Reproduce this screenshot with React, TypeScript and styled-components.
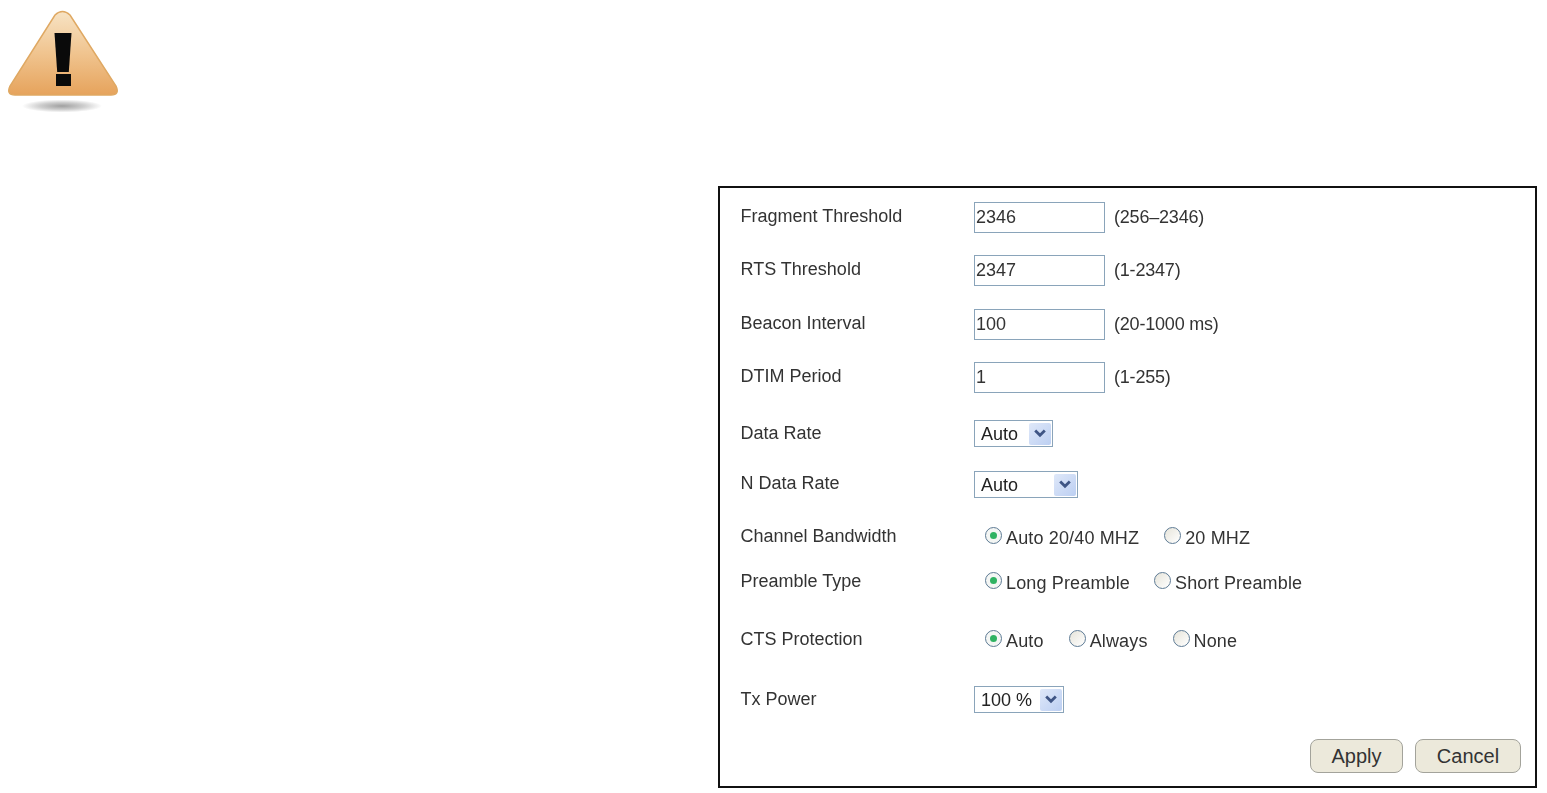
import React from 'react'
import styled, { createGlobalStyle } from 'styled-components'

const GlobalStyle = createGlobalStyle`
  html, body {
    margin: 0;
    padding: 0;
    background: #fff;
    font-family: "Liberation Sans", Arial, sans-serif;
  }
`

// the source is a soft, scaled-up capture, so everything is slightly out of focus
const Page = styled.div`
  width: 1547px;
  height: 793px;
  overflow: hidden;
  filter: blur(0.4px);
`

const WarningIcon = styled.svg`
  display: block;
  width: 130px;
  height: 120px;
`

const Panel = styled.form`
  box-sizing: border-box;
  width: 819px;
  height: 602px;
  margin: 66px 0 0 718px;
  padding: 14px 14px 0 21px;
  border: 2px solid #111;
`

const Row = styled.div<{ $h: number }>`
  display: flex;
  align-items: flex-start;
  height: ${(p) => p.$h}px;
`

const Label = styled.div<{ $top: number }>`
  width: 233px;
  flex-shrink: 0;
  margin-top: ${(p) => p.$top}px;
  margin-left: -0.5px;
  margin-right: 0.5px;
  font-size: 18px;
  line-height: 20px;
  color: #333;
`

const TextBox = styled.input`
  box-sizing: border-box;
  width: 131px;
  height: 31px;
  margin: 0;
  padding: 0 2px 0 1px;
  border: 1px solid #8aa4ba;
  background: #fff;
  font-family: inherit;
  font-size: 18px;
  color: #333;
  outline: none;
`

const Hint = styled.span`
  margin-left: 9px;
  font-size: 18px;
  line-height: 31px;
  letter-spacing: -0.2px;
  color: #333;
`

const SelectBox = styled.div<{ $w: number }>`
  box-sizing: border-box;
  display: flex;
  align-items: center;
  justify-content: space-between;
  width: ${(p) => p.$w}px;
  height: 27px;
  padding: 0 1px 0 6px;
  border: 1px solid #8aa4ba;
  background: #fff;
  font-size: 18px;
  color: #222;
`

const SelectText = styled.span`
  padding-top: 2px;
`

const SelectArrow = styled.span`
  display: flex;
  align-items: center;
  justify-content: center;
  width: 22px;
  height: 22px;
  border-radius: 2px;
  background: linear-gradient(135deg, #dfe8f9, #bccff2);
`

const RadioGroup = styled.div<{ $top: number; $gap: number }>`
  display: flex;
  gap: ${(p) => p.$gap}px;
  margin-top: ${(p) => p.$top}px;
  padding-left: 11px;
`

const RadioOption = styled.label`
  display: flex;
  align-items: flex-start;
  gap: 4px;
  font-size: 18px;
  line-height: 22px;
  letter-spacing: 0.15px;
  color: #333;
`

const RadioDot = styled.span<{ $on?: boolean }>`
  box-sizing: border-box;
  display: flex;
  align-items: center;
  justify-content: center;
  width: 17px;
  height: 17px;
  border: 1.5px solid #5d7a94;
  border-radius: 50%;
  background: ${(p) => (p.$on ? '#f4f6f4' : 'linear-gradient(135deg, #e6e4da, #fff)')};

  &::after {
    content: '';
    display: ${(p) => (p.$on ? 'block' : 'none')};
    width: 7px;
    height: 7px;
    border-radius: 50%;
    background: #2fb262;
  }
`

const Footer = styled.div`
  display: flex;
  justify-content: flex-end;
  gap: 12px;
`

const ActionButton = styled.button<{ $w: number }>`
  box-sizing: border-box;
  width: ${(p) => p.$w}px;
  height: 34px;
  padding: 0;
  border: 1.5px solid #a3a39b;
  border-radius: 8px;
  background: #ece9db;
  font-family: inherit;
  font-size: 20px;
  color: #333;
`

const Chevron = () => (
  <svg width="14" height="11" viewBox="0 0 14 11">
    <path d="M2.200 2.500 L7 7.300 L11.800 2.500" fill="none" stroke="#3f5585" strokeWidth="2.800" />
  </svg>
)

const Warning = () => (
  <WarningIcon viewBox="0 0 130 120">
    <defs>
      <linearGradient id="warnFill" x1="0" y1="0" x2="0" y2="1">
        <stop offset="0" stopColor="#f7e3c4" />
        <stop offset="0.5" stopColor="#f0c48f" />
        <stop offset="1" stopColor="#e6a35c" />
      </linearGradient>
      <radialGradient id="warnShadow">
        <stop offset="0" stopColor="#a0a0a0" />
        <stop offset="0.55" stopColor="#cecece" />
        <stop offset="1" stopColor="#ffffff" />
      </radialGradient>
    </defs>
    <ellipse cx="62" cy="106" rx="40" ry="6.500" fill="url(#warnShadow)" />
    <path
      d="M55 15 Q62.500 8 70 15 L116 86 Q120 95 111 95 L15 95 Q6 95 10 86 Z"
      fill="url(#warnFill)"
      stroke="#dfa862"
      strokeWidth="1.500"
    />
    <path d="M54.500 33 L71.500 33 L68.800 72 L57.200 72 Z" fill="#0a0a0a" />
    <rect x="56" y="74" width="15" height="12" fill="#0a0a0a" />
  </WarningIcon>
)

const inputRows = [
  { label: 'Fragment Threshold', value: '2346', hint: '(256\u20132346)', h: 53 },
  { label: 'RTS Threshold', value: '2347', hint: '(1-2347)', h: 54 },
  { label: 'Beacon Interval', value: '100', hint: '(20-1000 ms)', h: 53 },
  { label: 'DTIM Period', value: '1', hint: '(1-255)', h: 58 },
]

const radioRows = [
  { label: 'Channel Bandwidth', options: ['Auto 20/40 MHZ', '20 MHZ'], h: 46, labelTop: 0, top: 1, gap: 25 },
  { label: 'Preamble Type', options: ['Long Preamble', 'Short Preamble'], h: 58, labelTop: -1, top: 0, gap: 24 },
  { label: 'CTS Protection', options: ['Auto', 'Always', 'None'], h: 56, labelTop: -1, top: 0, gap: 25 },
]

export default function App() {
  return (
    <Page>
      <GlobalStyle />
      <Warning />
      <Panel onSubmit={(e) => e.preventDefault()}>
        {inputRows.map((r) => (
          <Row key={r.label} $h={r.h}>
            <Label $top={4}>{r.label}</Label>
            <TextBox defaultValue={r.value} />
            <Hint>{r.hint}</Hint>
          </Row>
        ))}
        <Row $h={51}>
          <Label $top={3}>Data Rate</Label>
          <SelectBox $w={79}><SelectText>Auto</SelectText><SelectArrow><Chevron /></SelectArrow></SelectBox>
        </Row>
        <Row $h={55}>
          <Label $top={2}>N Data Rate</Label>
          <SelectBox $w={104}><SelectText>Auto</SelectText><SelectArrow><Chevron /></SelectArrow></SelectBox>
        </Row>
        {radioRows.map((r) => (
          <Row key={r.label} $h={r.h}>
            <Label $top={r.labelTop}>{r.label}</Label>
            <RadioGroup $top={r.top} $gap={r.gap}>
              {r.options.map((o, i) => (
                <RadioOption key={o}>
                  <RadioDot $on={i === 0} />
                  {o}
                </RadioOption>
              ))}
            </RadioGroup>
          </Row>
        ))}
        <Row $h={53}>
          <Label $top={3}>Tx Power</Label>
          <SelectBox $w={90}><SelectText>100 %</SelectText><SelectArrow><Chevron /></SelectArrow></SelectBox>
        </Row>
        <Footer>
          <ActionButton $w={93} type="button">Apply</ActionButton>
          <ActionButton $w={106} type="button">Cancel</ActionButton>
        </Footer>
      </Panel>
    </Page>
  )
}
